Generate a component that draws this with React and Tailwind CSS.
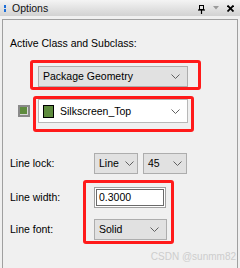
import React from "react";

const font = { fontFamily: '"Liberation Sans", Arial, sans-serif' };

function Chevron() {
  return (
    <svg width="9" height="5" viewBox="0 0 9 5" className="shrink-0">
      <polyline points="0.5,0.5 4.5,4.5 8.5,0.5" fill="none" stroke="#606060" strokeWidth="1" />
    </svg>
  );
}

function Select({ label, className = "" }) {
  return (
    <div className={`flex items-center justify-between h-[21px] border border-[#adadad] bg-[#e1e1e1] pl-[4px] ${className}`}>
      <span className="text-[10.5px] leading-none text-black">{label}</span>
      <Chevron />
    </div>
  );
}

export default function App() {
  return (
    <div className="relative w-[240px] h-[268px] bg-[#f0f0f0] overflow-hidden flex flex-col" style={font}>
      {/* title bar */}
      <div className="h-[16px] flex items-center bg-gradient-to-b from-[#f4f4f4] to-[#d2d2d2] pl-[4px] pr-[6px]">
        <div className="flex flex-col gap-[1px] mr-[6px]">
          <div className="w-[2px] h-[3px] bg-[#1e6fd9]" />
          <div className="w-[2px] h-[3px] bg-[#1e6fd9]" />
        </div>
        <span className="text-[10.5px] leading-none text-[#111]">Options</span>
        <div className="ml-auto flex items-center">
          <svg width="7" height="9" viewBox="0 0 7 9" className="mr-[8px] mt-[2px]">
            <rect x="1.5" y="0.5" width="4" height="4" fill="none" stroke="#000" strokeWidth="1" />
            <line x1="0" y1="5" x2="7" y2="5" stroke="#000" strokeWidth="1.2" />
            <line x1="3.5" y1="5" x2="3.5" y2="9" stroke="#000" strokeWidth="1.2" />
          </svg>
          <svg width="6" height="4" viewBox="0 0 6 4" className="mr-[8px]">
            <polygon points="0,0 6,0 3,3.5" fill="#9a9a9a" />
          </svg>
          <svg width="7" height="7" viewBox="0 0 7 7">
            <line x1="0.5" y1="0.5" x2="6.5" y2="6.5" stroke="#000" strokeWidth="1.8" />
            <line x1="6.5" y1="0.5" x2="0.5" y2="6.5" stroke="#000" strokeWidth="1.8" />
          </svg>
        </div>
      </div>

      {/* panel */}
      <div className="flex-1 mt-[3px] mx-[2px] border border-b-0 border-[#a0a0a0] flex flex-col pl-[7px]">
        <div className="mt-[18px] h-[12px] flex items-center text-[10.5px] text-black">Active Class and Subclass:</div>

        <div className="mt-[16px] ml-[28px] w-[150px]">
          <Select label="Package Geometry" className="pr-[7px]" />
        </div>

        <div className="mt-[12px] flex items-center">
          <div className="ml-[8px] w-[12px] h-[12px] border-2 border-[#8a8a8a] bg-[#5e8b3e] shadow-[inset_-1px_-1px_0_#d8d8d8]" />
          <div className="ml-[8px] w-[150px] h-[24px] border border-[#b8b8b8] bg-white flex items-center pl-[4px] pr-[7px]">
            <div className="w-[11px] h-[13px] border border-black bg-[#5e8b3e]" />
            <span className="ml-[6px] text-[10.5px] leading-none text-black">Silkscreen_Top</span>
            <div className="ml-auto"><Chevron /></div>
          </div>
        </div>

        <div className="mt-[30px] flex items-center h-[21px]">
          <span className="w-[84px] text-[10.5px] leading-none text-black">Line lock:</span>
          <Select label="Line" className="w-[44px] pr-[3px]" />
          <Select label="45" className="w-[44px] ml-[5px] pr-[4px]" />
        </div>

        <div className="mt-[13px] flex items-center h-[21px]">
          <span className="w-[84px] text-[10.5px] leading-none text-black">Line width:</span>
          <div className="w-[72px] h-[21px] border border-[#a0a0a0] bg-white p-px">
            <div className="h-full border border-[#6a6a6a] bg-white flex items-center pl-[2px]">
              <span className="text-[10.5px] leading-none text-black">0.3000</span>
            </div>
          </div>
        </div>

        <div className="mt-[11px] flex items-center h-[21px]">
          <span className="w-[84px] text-[10.5px] leading-none text-black">Line font:</span>
          <Select label="Solid" className="w-[73px] pr-[7px]" />
        </div>

        <div className="mt-[12px] mr-[1px] flex justify-end text-[10px] leading-none text-[#cdcdcd]">CSDN @sunmm82</div>
      </div>

      {/* red annotation boxes */}
      <div className="absolute left-[30px] top-[60px] w-[171px] h-[30px] border-[3px] border-[#ff1a1a] rounded-[3px]" />
      <div className="absolute left-[33px] top-[96px] w-[161px] h-[36px] border-[3px] border-[#ff1a1a] rounded-[3px]" />
      <div className="absolute left-[83px] top-[180px] w-[91px] h-[64px] border-[3px] border-[#ff1a1a] rounded-[3px]" />
    </div>
  );
}
